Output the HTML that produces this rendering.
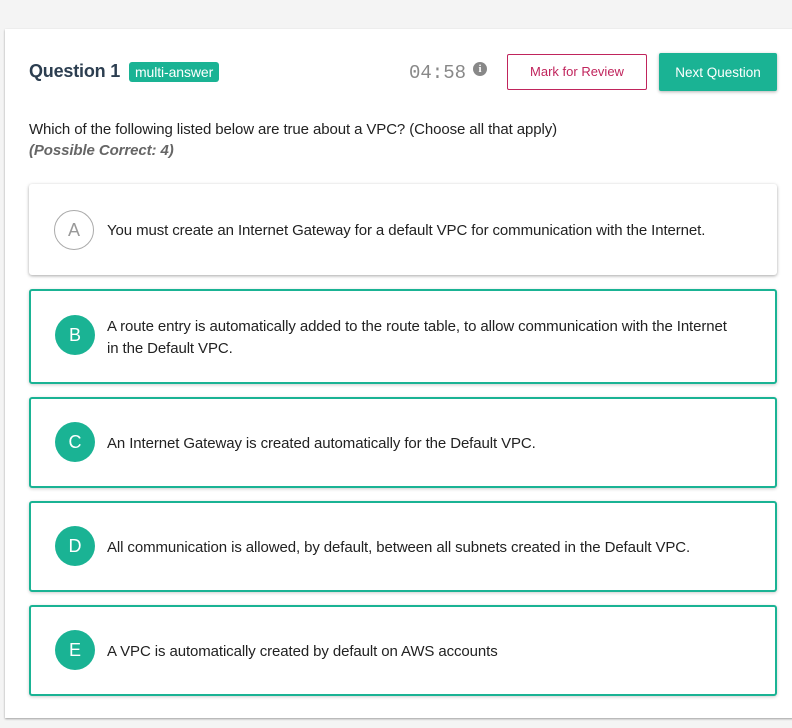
<!DOCTYPE html>
<html><head><style>
body{margin:0;background:#f4f4f4;font-family:"Liberation Sans",sans-serif;width:792px;height:728px;overflow:hidden;position:relative}
.card{position:absolute;left:5px;top:29px;width:800px;height:689px;background:#fff;box-shadow:0 1px 2px rgba(0,0,0,.35)}
.t{position:absolute;left:29px;top:61px;font-size:18px;font-weight:bold;color:#2c3e50;letter-spacing:-0.2px}
.badge{position:absolute;left:129px;top:62px;background:#1ab394;color:#fff;font-size:14px;padding:1px 6px;border-radius:3px;height:18px;line-height:18px;letter-spacing:-0.1px}
.timer{position:absolute;left:409px;top:62px;font-family:"Liberation Mono",monospace;font-size:19px;color:#888}
.info{position:absolute;left:473px;top:62px;width:14px;height:14px;border-radius:50%;background:#888;color:#fff;font-size:11px;font-weight:bold;text-align:center;line-height:14px;font-family:"Liberation Serif",serif}
.mark{position:absolute;left:507px;top:54px;width:138px;height:34px;border:1px solid #c0245c;border-radius:2px;color:#c0245c;font-size:13px;text-align:center;line-height:34px;box-sizing:content-box}
.next{position:absolute;left:659px;top:53px;width:118px;height:38px;background:#1ab394;color:#fff;border-radius:2px;font-size:13.5px;text-align:center;line-height:40px;box-shadow:0 1px 3px rgba(0,0,0,.3)}
.q{position:absolute;left:29px;top:119px;font-size:15px;color:#222;letter-spacing:-0.1px;line-height:21px}
.q i{font-weight:bold;color:#666}
.opt{position:absolute;left:29px;width:744px;border:2px solid #1ab394;border-radius:3px;background:#fff;box-shadow:0 1px 3px rgba(0,0,0,.2)}
.opt.a{border:none;width:748px;box-shadow:0 1px 3px rgba(0,0,0,.35)}
.c{position:absolute;left:24px;width:40px;height:40px;border-radius:50%;background:#1ab394;color:#fff;font-size:18px;text-align:center;line-height:40px}
.a .c{background:#fff;border:1px solid #aaa;color:#999;width:38px;height:38px;line-height:38px;left:25px}
.tx{position:absolute;left:76px;font-size:15px;color:#222;letter-spacing:-0.1px;line-height:22px;width:650px}
.a .tx{left:78px}
</style></head><body>
<div class="card"></div>
<div class="t">Question 1</div>
<div class="badge">multi-answer</div>
<div class="timer">04:58</div>
<div class="info">i</div>
<div class="mark">Mark for Review</div>
<div class="next">Next Question</div>
<div class="q">Which of the following listed below are true about a VPC? (Choose all that apply)<br><i>(Possible Correct: 4)</i></div>
<div class="opt a" style="top:184px;height:91px"><div class="c" style="top:26px">A</div><div class="tx" style="top:36px">You must create an Internet Gateway for a default VPC for communication with the Internet.</div></div>
<div class="opt" style="top:289px;height:91px"><div class="c" style="top:24px">B</div><div class="tx" style="top:25px">A route entry is automatically added to the route table, to allow communication with the Internet<br>in the Default VPC.</div></div>
<div class="opt" style="top:397px;height:87px"><div class="c" style="top:23px">C</div><div class="tx" style="top:34px">An Internet Gateway is created automatically for the Default VPC.</div></div>
<div class="opt" style="top:501px;height:87px"><div class="c" style="top:23px">D</div><div class="tx" style="top:34px">All communication is allowed, by default, between all subnets created in the Default VPC.</div></div>
<div class="opt" style="top:605px;height:87px"><div class="c" style="top:23px">E</div><div class="tx" style="top:34px">A VPC is automatically created by default on AWS accounts</div></div>
</body></html>
